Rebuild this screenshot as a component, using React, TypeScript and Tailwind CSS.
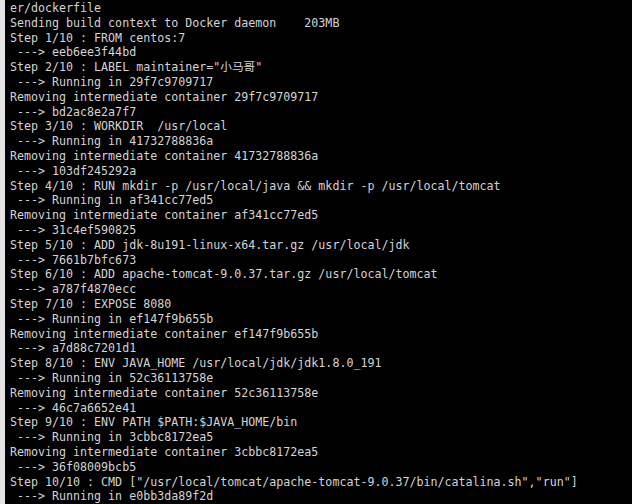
const lines = [
  'er/dockerfile',
  'Sending build context to Docker daemon    203MB',
  'Step 1/10 : FROM centos:7',
  ' ---> eeb6ee3f44bd',
  'Step 2/10 : LABEL maintainer="小马哥"',
  ' ---> Running in 29f7c9709717',
  'Removing intermediate container 29f7c9709717',
  ' ---> bd2ac8e2a7f7',
  'Step 3/10 : WORKDIR  /usr/local',
  ' ---> Running in 41732788836a',
  'Removing intermediate container 41732788836a',
  ' ---> 103df245292a',
  'Step 4/10 : RUN mkdir -p /usr/local/java && mkdir -p /usr/local/tomcat',
  ' ---> Running in af341cc77ed5',
  'Removing intermediate container af341cc77ed5',
  ' ---> 31c4ef590825',
  'Step 5/10 : ADD jdk-8u191-linux-x64.tar.gz /usr/local/jdk',
  ' ---> 7661b7bfc673',
  'Step 6/10 : ADD apache-tomcat-9.0.37.tar.gz /usr/local/tomcat',
  ' ---> a787f4870ecc',
  'Step 7/10 : EXPOSE 8080',
  ' ---> Running in ef147f9b655b',
  'Removing intermediate container ef147f9b655b',
  ' ---> a7d88c7201d1',
  'Step 8/10 : ENV JAVA_HOME /usr/local/jdk/jdk1.8.0_191',
  ' ---> Running in 52c36113758e',
  'Removing intermediate container 52c36113758e',
  ' ---> 46c7a6652e41',
  'Step 9/10 : ENV PATH $PATH:$JAVA_HOME/bin',
  ' ---> Running in 3cbbc8172ea5',
  'Removing intermediate container 3cbbc8172ea5',
  ' ---> 36f08009bcb5',
  'Step 10/10 : CMD ["/usr/local/tomcat/apache-tomcat-9.0.37/bin/catalina.sh","run"]',
  ' ---> Running in e0bb3da89f2d',
];

export default function App() {
  return (
    <div className="flex h-[504px] w-[632px] overflow-hidden bg-black">
      {/* window edge */}
      <div className="w-[5px] shrink-0 bg-[#e4e4e4]" />
      <pre className="mt-[1px] pl-[5px] font-['DejaVu_Sans_Mono','Noto_Sans_CJK_SC',monospace] text-[11.65px] leading-[14.8px] text-[#d4d4d4]">
        {lines.map((l, i) => (
          <div key={i}>{l}</div>
        ))}
      </pre>
    </div>
  );
}
